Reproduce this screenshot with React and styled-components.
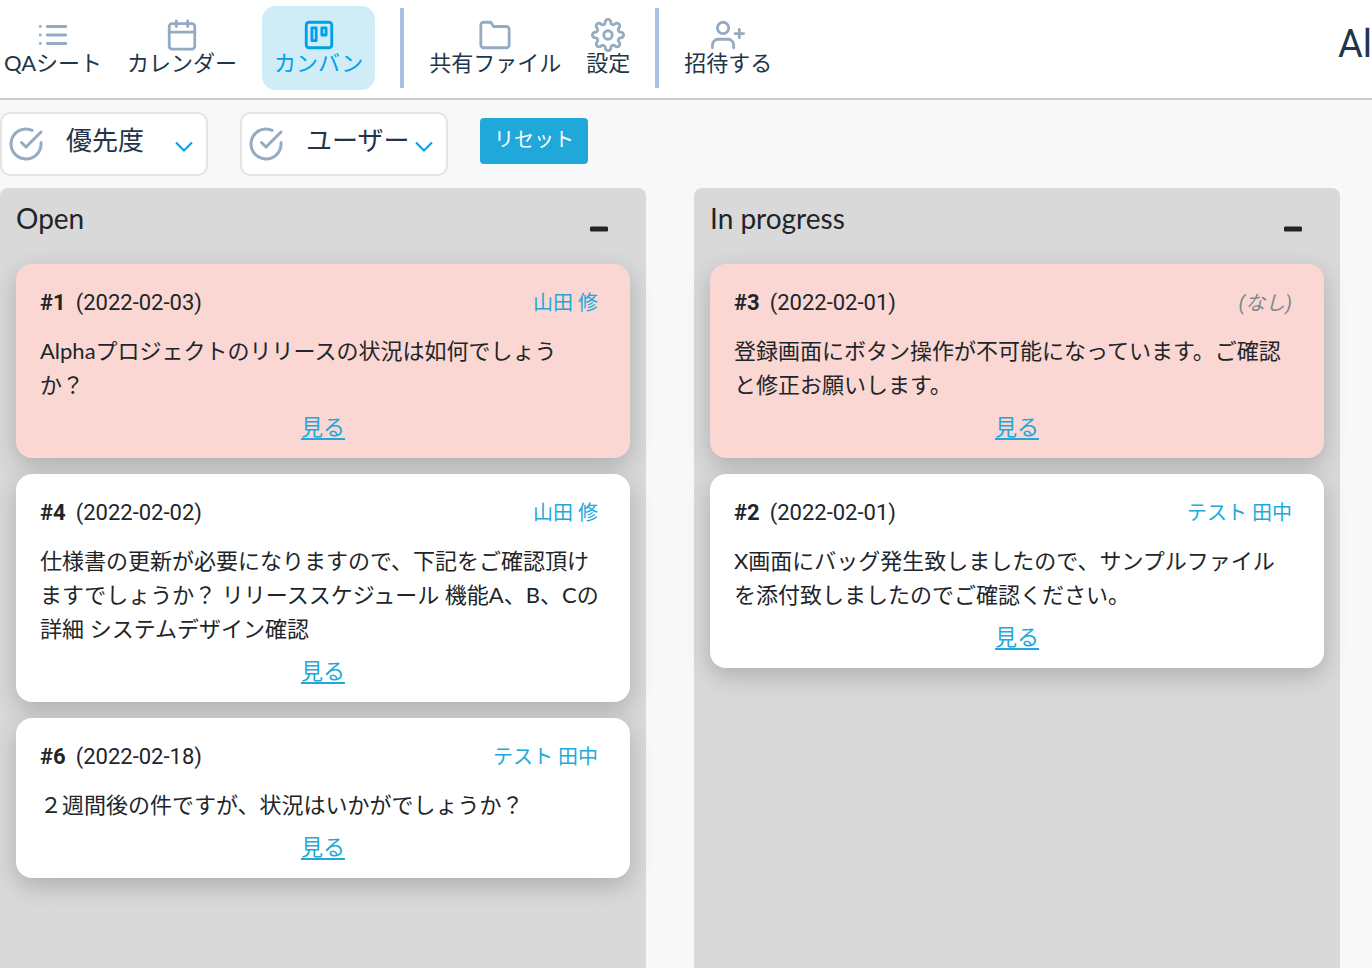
import styled, {createGlobalStyle} from 'styled-components';
import {useState} from 'react';
import {
    FiList,
    FiCalendar,
    FiTrello,
    FiFolder,
    FiSettings,
    FiUserPlus,
    FiCheckCircle
} from 'react-icons/fi';

const GlobalStyle = createGlobalStyle `
  :root {
    --ff-main: Lato, 'Noto Sans CJK JP', sans-serif;
    --ff-number: Roboto, 'Noto Sans CJK JP', sans-serif;
    --colors-text: #212529;
    --colors-navy: #22344a;
    --colors-icon: #95abc1;
    --colors-active: #00a0e9;
    --colors-primary: #21a8db;
  }
  *, *::before, *::after {
    box-sizing: border-box;
  }
  body {
    margin: 0;
    background-color: #f8f8f8;
    color: var(--colors-text);
    font-family: var(--ff-main);
    font-size: 22px;
    font-weight: 400;
  }
  button, select {
    font-family: inherit;
    cursor: pointer;
  }
`;

const Page = styled.div `
  display: flex;
  flex-direction: column;
  min-height: 100vh;
`;

const Header = styled.header `
  display: flex;
  justify-content: space-between;
  padding: 6px 0 8px;
  background-color: #fff;
  border-bottom: 2px solid #c7ced5;
  white-space: nowrap;
`;

const Nav = styled.nav `
  display: flex;
  gap: 25px;
  padding-left: 4px;
`;

const NavItem = styled.a `
  display: flex;
  flex-direction: column;
  align-items: center;
  height: 84px;
  padding: ${({$active}) => $active ? '12px' : '12px 0'};
  border-radius: 14px;
  background-color: ${({$active}) => $active ? '#cfecf7' : 'transparent'};
  color: ${({$active}) => $active ? 'var(--colors-active)' : 'var(--colors-navy)'};
  line-height: 22px;
  text-decoration: none;
  & > svg {
    width: 34px;
    height: 34px;
    color: ${({$active}) => $active ? 'var(--colors-active)' : 'var(--colors-icon)'};
  }
`;

const Divider = styled.span `
  width: 4px;
  height: 80px;
  margin-top: 2px;
  background-color: #abc0e4;
`;

const ProjectName = styled.div `
  color: var(--colors-navy);
  font-family: var(--ff-number);
  font-size: 38px;
  line-height: 76px;
`;

const Filters = styled.div `
  display: flex;
  gap: 32px;
  padding: 12px 0;
`;

const FilterBox = styled.label `
  display: grid;
  grid-template-columns: 1fr auto;
  align-items: center;
  width: 208px;
  height: 64px;
  border: 2px solid #e4e5e6;
  border-radius: 10px;
  background-color: #fff;
  & > svg {
    grid-row: 1;
    pointer-events: none;
  }
`;

const CheckIcon = styled(FiCheckCircle)`
  grid-column: 1;
  width: 36px;
  height: 36px;
  margin-left: 6px;
  color: var(--colors-icon);
`;

const Chevron = styled.svg `
  grid-column: 2;
  width: 18px;
  height: 12px;
  margin: 6px 13px 0 0;
  color: var(--colors-active);
`;

const Select = styled.select `
  grid-row: 1;
  grid-column: 1 / -1;
  width: 100%;
  height: 60px;
  padding: 0 0 8px 64px;
  border: 0;
  background: transparent;
  color: var(--colors-navy);
  font-size: 26px;
  appearance: none;
`;

const ResetButton = styled.button `
  height: 46px;
  margin-top: 6px;
  padding: 0 14px 6px;
  border: 0;
  border-radius: 4px;
  background-color: var(--colors-primary);
  color: #fff;
  font-size: 20px;
`;

const Board = styled.main `
  display: grid;
  grid-template-columns: 1fr 1fr;
  flex: 1;
  gap: 48px;
  padding-right: 32px;
`;

const Column = styled.section `
  padding: 0 16px 16px;
  border-radius: 8px 8px 0 0;
  background-color: #d9d9d9;
`;

const ColumnHeader = styled.div `
  display: flex;
  justify-content: space-between;
  height: 76px;
  padding-top: 14px;
`;

const ColumnTitle = styled.h2 `
  margin: 0;
  font-size: 28px;
  font-weight: 400;
  line-height: 32px;
`;

const CollapseButton = styled.button `
  display: flex;
  align-items: center;
  justify-content: center;
  width: 30px;
  height: 30px;
  margin: 12px 16px 0 0;
  padding: 0;
  border: 0;
  background: transparent;
  color: var(--colors-text);
`;

const CardList = styled.div `
  display: flex;
  flex-direction: column;
  gap: 16px;
`;

const Card = styled.article `
  padding: 22px 24px 14px;
  border-radius: 16px;
  background-color: ${({$urgent}) => $urgent ? '#fad7d2' : '#fff'};
  box-shadow: 0 8px 24px rgba(0, 0, 0, 0.2);
  line-height: 34px;
`;

const CardHeader = styled.div `
  display: flex;
  justify-content: space-between;
  padding-right: 8px;
  font-family: var(--ff-number);
`;

const CardDate = styled.span `
  margin-left: 10px;
`;

const Assignee = styled.span `
  color: ${({$empty}) => $empty ? '#7d8892' : 'var(--colors-primary)'};
  font-size: 20px;
  font-style: ${({$empty}) => $empty ? 'italic' : 'normal'};
`;

const CardText = styled.p `
  margin: 14px 0 8px;
  padding-right: 6px;
`;

const CardFooter = styled.div `
  text-align: center;
`;

const CardLink = styled.a `
  color: var(--colors-primary);
  text-underline-offset: 3px;
  text-decoration-thickness: 2px;
`;

const columns = [
    {
        title: 'Open',
        cards: [
            {
                id: 1,
                date: '2022-02-03',
                user: '山田 修',
                urgent: true,
                text: 'Alphaプロジェクトのリリースの状況は如何でしょうか？'
            }, {
                id: 4,
                date: '2022-02-02',
                user: '山田 修',
                text: '仕様書の更新が必要になりますので、下記をご確認頂けますでしょうか？ リリーススケジュール 機能A、B、Cの詳細 システムデザイン確認'
            }, {
                id: 6,
                date: '2022-02-18',
                user: 'テスト 田中',
                text: '２週間後の件ですが、状況はいかがでしょうか？'
            }
        ]
    }, {
        title: 'In progress',
        cards: [
            {
                id: 3,
                date: '2022-02-01',
                urgent: true,
                text: '登録画面にボタン操作が不可能になっています。ご確認と修正お願いします。'
            }, {
                id: 2,
                date: '2022-02-01',
                user: 'テスト 田中',
                text: 'X画面にバッグ発生致しましたので、サンプルファイルを添付致しましたのでご確認ください。'
            }
        ]
    }
];

const NavLink = ({icon: Icon, label, active}) => (
    <NavItem href="#" $active={active} aria-current={active ? 'page' : undefined}>
        <Icon strokeWidth={2}/>
        <span>{label}</span>
    </NavItem>
);

const Filter = ({label}) => (
    <FilterBox>
        <Select aria-label={label}>
            <option>{label}</option>
        </Select>
        <CheckIcon strokeWidth={2}/>
        <Chevron viewBox="0 0 18 12" fill="none" stroke="currentColor" strokeWidth="2">
            <path d="M1 1.5l8 8 8-8"/>
        </Chevron>
    </FilterBox>
);

const TicketCard = ({id, date, user, urgent, text}) => (
    <Card $urgent={urgent}>
        <CardHeader>
            <div>
                <b>#{id}</b>
                <CardDate>({date})</CardDate>
            </div>
            <Assignee $empty={!user}>{user || '(なし)'}</Assignee>
        </CardHeader>
        <CardText>{text}</CardText>
        <CardFooter>
            <CardLink href="#">見る</CardLink>
        </CardFooter>
    </Card>
);

const BoardColumn = ({title, cards}) => {
    const [open, setOpen] = useState(true);

    return (
        <Column>
            <ColumnHeader>
                <ColumnTitle>{title}</ColumnTitle>
                <CollapseButton
                    type="button"
                    aria-label={title}
                    aria-expanded={open}
                    onClick={() => setOpen(!open)}>
                    <svg width="18" height="6" viewBox="0 0 18 6" fill="currentColor">
                        <rect y="0.5" width="18" height="5" rx="1.2"/>
                    </svg>
                </CollapseButton>
            </ColumnHeader>
            {open && (
                <CardList>
                    {cards.map((card) => (
                        <TicketCard key={card.id} {...card}/>
                    ))}
                </CardList>
            )}
        </Column>
    );
};

const App = () => (
    <>
        <GlobalStyle/>
        <Page>
            <Header>
                <Nav>
                    <NavLink icon={FiList} label="QAシート"/>
                    <NavLink icon={FiCalendar} label="カレンダー"/>
                    <NavLink icon={FiTrello} label="カンバン" active/>
                    <Divider/>
                    <NavLink icon={FiFolder} label="共有ファイル"/>
                    <NavLink icon={FiSettings} label="設定"/>
                    <Divider/>
                    <NavLink icon={FiUserPlus} label="招待する"/>
                </Nav>
                <ProjectName>Al</ProjectName>
            </Header>
            <Filters>
                <Filter label="優先度"/>
                <Filter label="ユーザー"/>
                <ResetButton type="button">リセット</ResetButton>
            </Filters>
            <Board>
                {columns.map((column) => (
                    <BoardColumn key={column.title} {...column}/>
                ))}
            </Board>
        </Page>
    </>
);

export default App;
